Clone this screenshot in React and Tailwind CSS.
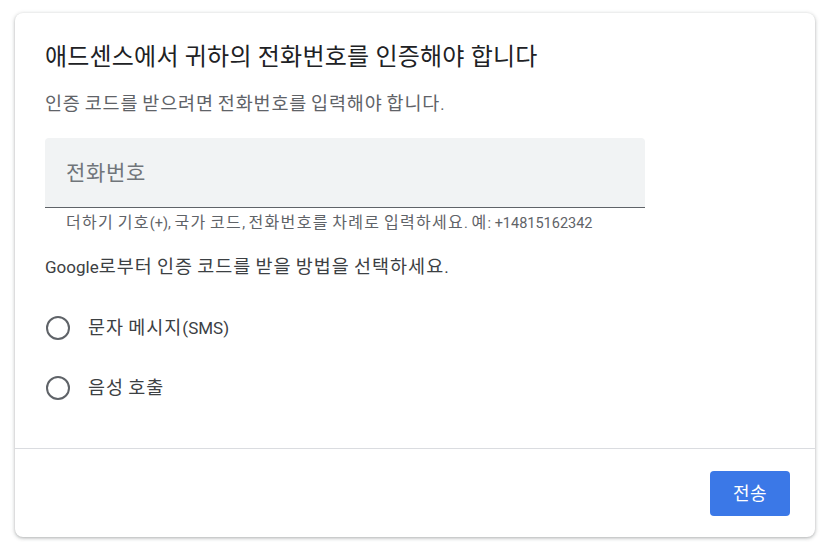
import React, { useState } from "react";

const FONT = { fontFamily: 'Roboto, "Noto Sans CJK KR", sans-serif' };

// 한글 구간만 따로 감싸서 크기/자간을 맞춘다
function Ko({ text, k }) {
  const parts = text.split(/([\uAC00-\uD7A3]+)/);
  return parts.map((p, i) =>
    /[\uAC00-\uD7A3]/.test(p) ? (
      <span key={i} className={k}>
        {p}
      </span>
    ) : (
      <span key={i}>{p}</span>
    )
  );
}

function Radio({ label, checked, onClick }) {
  return (
    <button
      type="button"
      onClick={onClick}
      className="flex items-center h-[60px] text-left"
    >
      <span className="flex items-center justify-center w-[24px] h-[24px] rounded-full border-2 border-[#5f6368] ml-[1px]">
        {checked && <span className="w-[12px] h-[12px] rounded-full bg-[#1a73e8]" />}
      </span>
      <span className="ml-[18px] text-[17px] leading-[22px] text-[#3c4043] whitespace-nowrap">
        <Ko text={label} k="text-[18.5px] tracking-[1px]" />
      </span>
    </button>
  );
}

export default function App() {
  const [method, setMethod] = useState(null);

  return (
    <div className="w-[829px] h-[542px] bg-white pt-[13px] pl-[15px]" style={FONT}>
      <div className="w-[800px] h-[524px] rounded-[8px] bg-white shadow-[0_1px_3px_rgba(60,64,67,0.3),0_1px_4px_1px_rgba(60,64,67,0.12)] flex flex-col">
        <div className="px-[30px] pt-[28px] flex-1">
          <h1 className="text-[24px] tracking-[0.2px] leading-[32px] text-[#202124] whitespace-nowrap">
            애드센스에서 귀하의 전화번호를 인증해야 합니다
          </h1>
          <p className="mt-[21px] text-[16px] leading-[20px] text-[#5f6368] whitespace-nowrap">
            <Ko text="인증 코드를 받으려면 전화번호를 입력해야 합니다." k="text-[18.5px] tracking-[0.85px]" />
          </p>

          <div className="mt-[23px] w-[600px] h-[70px] bg-[#f1f3f4] rounded-t-[4px] border-b border-[#5f6368] flex items-center px-[21px]">
            <span className="text-[21px] tracking-[0.7px] leading-[24px] text-[#70757a]">전화번호</span>
          </div>
          <p className="mt-[6px] pl-[21px] text-[14.5px] leading-[18px] text-[#5f6368] whitespace-nowrap">
            <Ko
              text="더하기 기호(+), 국가 코드, 전화번호를 차례로 입력하세요. 예: +14815162342"
              k="text-[16px] tracking-[1.3px]"
            />
          </p>

          <p className="mt-[23px] text-[17px] leading-[22px] text-[#3c4043] whitespace-nowrap">
            <Ko text="Google로부터 인증 코드를 받을 방법을 선택하세요." k="text-[18.5px] tracking-[1px]" />
          </p>

          <div className="mt-[20px] flex flex-col">
            <Radio label="문자 메시지(SMS)" checked={method === "sms"} onClick={() => setMethod("sms")} />
            <Radio label="음성 호출" checked={method === "voice"} onClick={() => setMethod("voice")} />
          </div>
        </div>

        <div className="border-t border-[#dadce0] h-[89px] flex items-start justify-end px-[25px] pt-[22px]">
          <button className="w-[80px] h-[45px] rounded-[4px] bg-[#3b78e7] text-white text-[18px] tracking-[0.5px]">
            전송
          </button>
        </div>
      </div>
    </div>
  );
}
